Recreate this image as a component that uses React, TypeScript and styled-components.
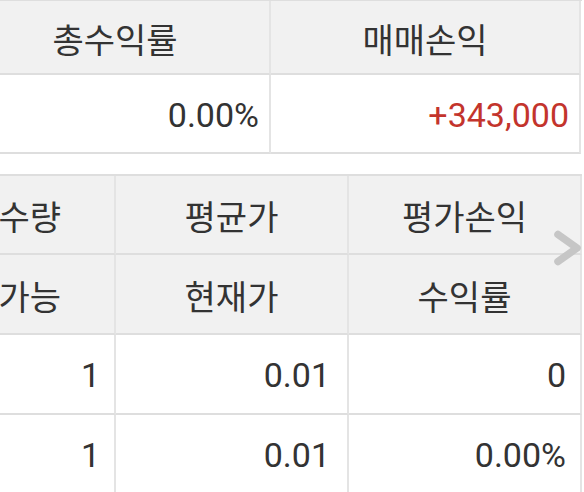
import React from "react";
import styled, { createGlobalStyle } from "styled-components";

const Global = createGlobalStyle`
  html, body { margin: 0; padding: 0; background: #ffffff; }
  body { font-family: Roboto, "Noto Sans CJK KR", "Noto Sans", sans-serif; color: #333333; }
`;

const Viewport = styled.div`
  position: relative;
  width: 582px;
  height: 492px;
  overflow: hidden;
  background: #ffffff;
`;

const Table = styled.div<{ $cols: number; $width: number; $shift: number; $gap?: number }>`
  display: grid;
  grid-template-columns: repeat(${(p) => p.$cols}, ${(p) => p.$width}px);
  margin-left: ${(p) => -p.$shift}px;
  margin-top: ${(p) => p.$gap ?? 0}px;
  border-top: ${(p) => (p.$gap ? 2 : 1)}px solid #dedede;
`;

const Cell = styled.div<{ $head?: boolean; $h: number; $align?: "center" | "right"; $pad?: number; $red?: boolean }>`
  box-sizing: border-box;
  height: ${(p) => p.$h}px;
  display: flex;
  align-items: center;
  justify-content: ${(p) => (p.$align === "right" ? "flex-end" : "center")};
  padding-right: ${(p) => p.$pad ?? 0}px;
  padding-top: 2px;
  background: ${(p) => (p.$head ? "#f1f1f1" : "#ffffff")};
  border-right: 2px solid #e4e4e4;
  border-bottom: 2px solid #dedede;
  font-size: 34px;
  color: ${(p) => (p.$red ? "#c3342c" : "#333333")};
  white-space: nowrap;
`;

const Chevron = styled.svg`
  position: absolute;
  right: 0;
  top: 230px;
  width: 30px;
  height: 36px;
`;

export default function App() {
  return (
    <>
      <Global />
      <Viewport>
        <Table $cols={2} $width={310} $shift={39}>
          <Cell $head $h={74}>총수익률</Cell>
          <Cell $head $h={74}>매매손익</Cell>
          <Cell $h={79} $align="right" $pad={10}>0.00%</Cell>
          <Cell $h={79} $align="right" $pad={10} $red>+343,000</Cell>
        </Table>
        <Table $cols={3} $width={233} $shift={117} $gap={20}>
          <Cell $head $h={79}>보유수량</Cell>
          <Cell $head $h={79}>평균가</Cell>
          <Cell $head $h={79}>평가손익</Cell>
          <Cell $head $h={80}>매도가능</Cell>
          <Cell $head $h={80}>현재가</Cell>
          <Cell $head $h={80}>수익률</Cell>
          <Cell $h={80} $align="right" $pad={14}>1</Cell>
          <Cell $h={80} $align="right" $pad={17}>0.01</Cell>
          <Cell $h={80} $align="right" $pad={14}>0</Cell>
          <Cell $h={80} $align="right" $pad={14}>1</Cell>
          <Cell $h={80} $align="right" $pad={17}>0.01</Cell>
          <Cell $h={80} $align="right" $pad={14}>0.00%</Cell>
        </Table>
        <Chevron viewBox="0 0 30 36">
          <path d="M6 4.5 L25 18 L6 31.5" fill="none" stroke="#c6c6c6" strokeWidth="7.5" strokeLinecap="round" strokeLinejoin="round" />
        </Chevron>
      </Viewport>
    </>
  );
}
